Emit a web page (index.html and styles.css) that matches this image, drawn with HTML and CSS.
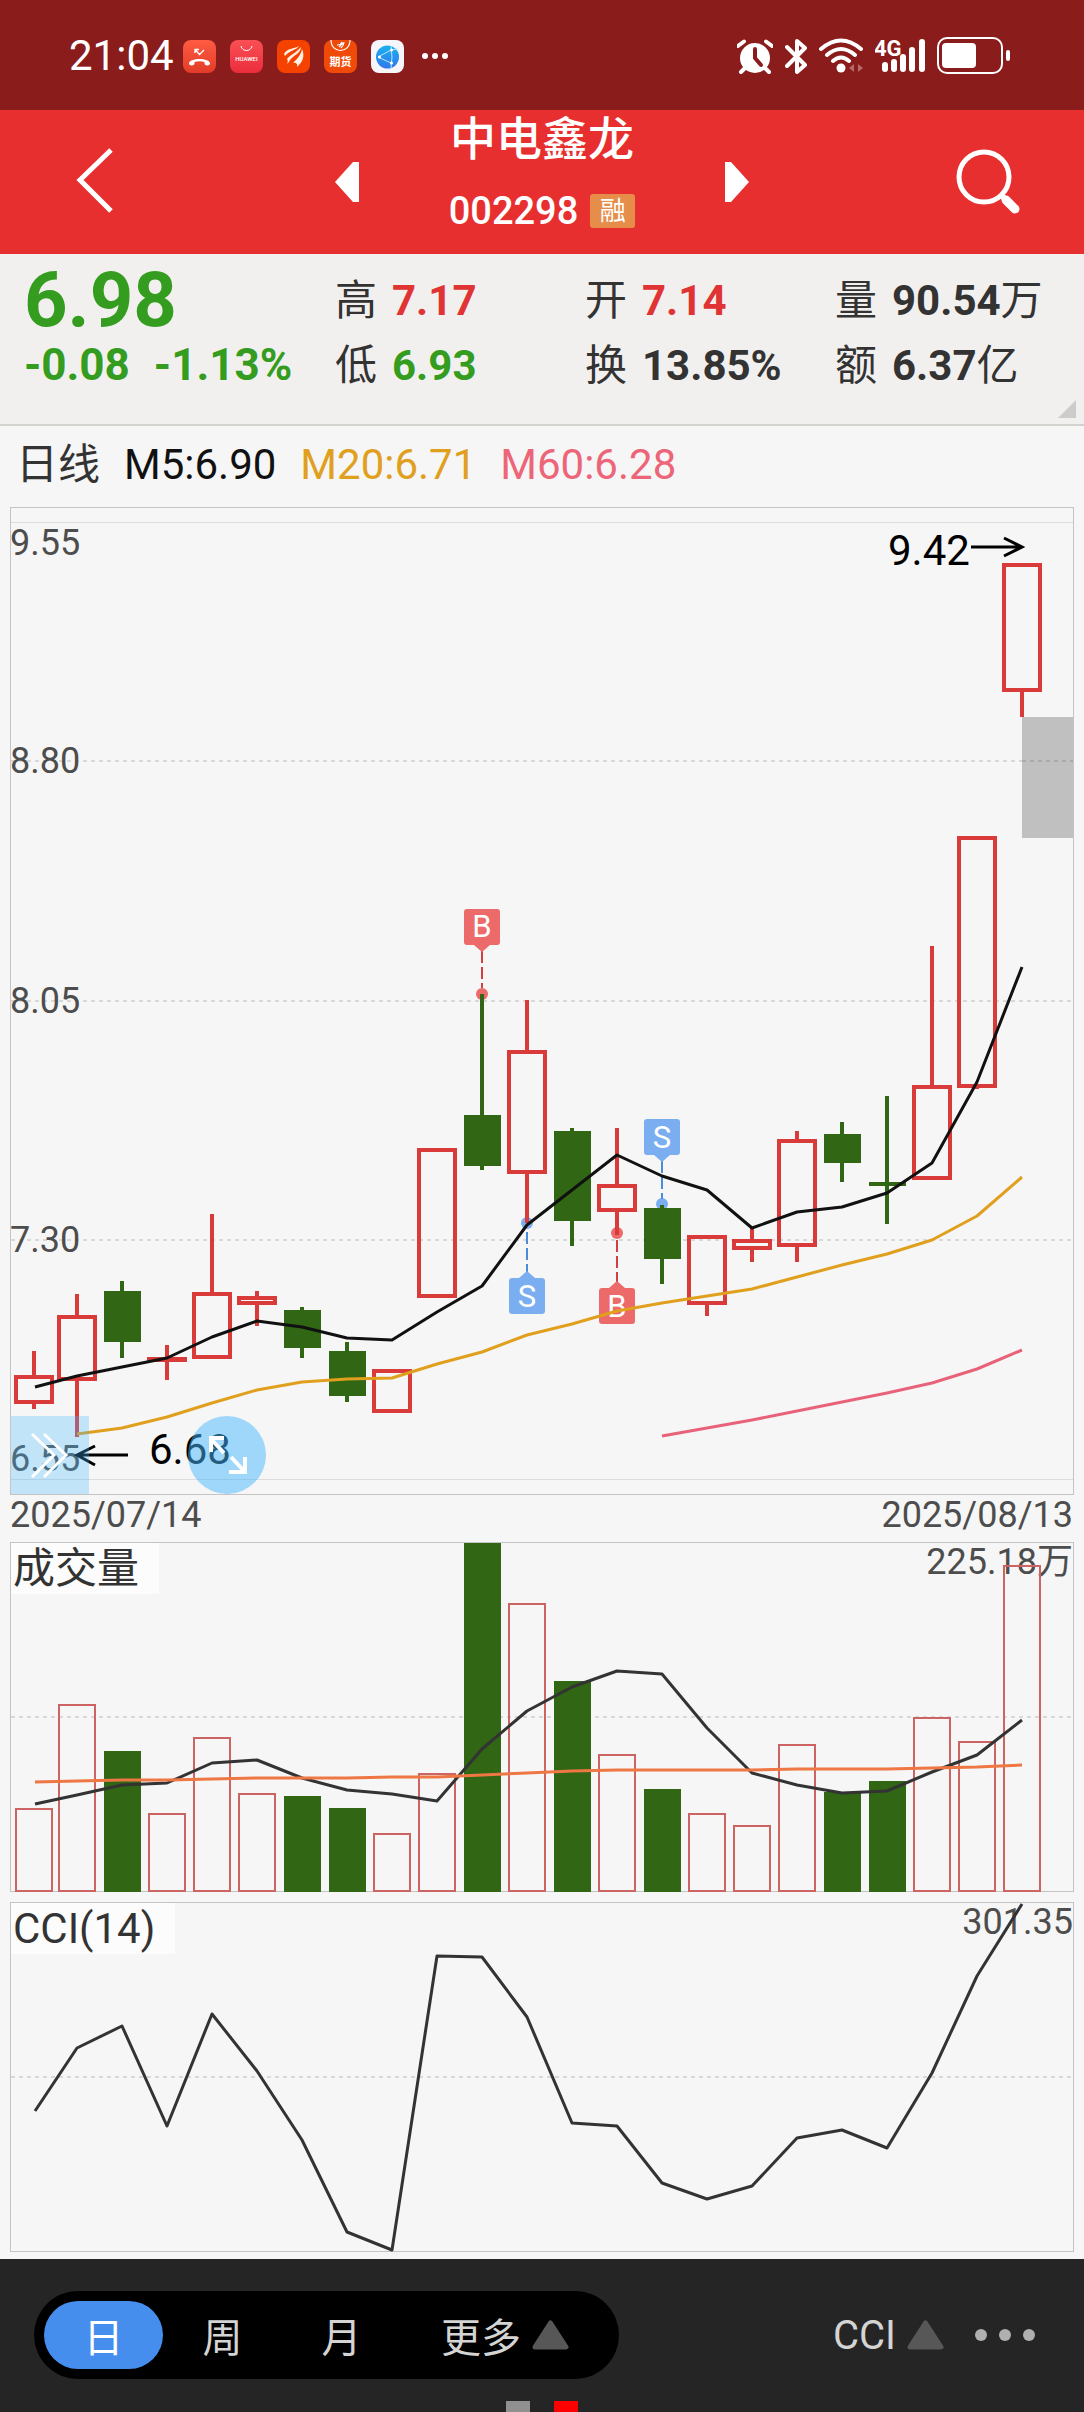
FILE: index.html
```html
<!DOCTYPE html>
<html lang="zh-CN">
<head>
<meta charset="utf-8">
<meta name="viewport" content="width=device-width, initial-scale=1">
<title>中电鑫龙 002298</title>
<link rel="stylesheet" href="styles.css">
</head>
<body>
<div class="status">
  <div class="status-side">
    <span class="clock">21:04</span>
    <div class="apps">
      <svg class="app" viewBox="0 0 33 33"><defs><linearGradient id="g1" x2="0" y2="1"><stop stop-color="#ff5c43"/><stop offset="1" stop-color="#e23c28"/></linearGradient></defs><rect width="33" height="33" rx="8" fill="url(#g1)"/><path d="M6 23.500c0-6 21-6 21 0 0 2.500-5.500 2.500-5.500 0v-1.500c-3-1-7-1-10 0v1.500c0 2.500-5.500 2.500-5.500 0z" fill="#fff"/><path d="M12 13V9.500h4M12 9.500l4.500 5 4.500-4.500" fill="none" stroke="#fff" stroke-width="1.300"/></svg>
      <svg class="app" viewBox="0 0 33 33"><defs><linearGradient id="g2" x2="0" y2="1"><stop stop-color="#fa5054"/><stop offset="1" stop-color="#ea2d3c"/></linearGradient></defs><rect width="33" height="33" rx="8" fill="url(#g2)"/><path d="M11 6c1 6 10 6 11 0" fill="none" stroke="#fff" stroke-width="1"/><text x="16.500" y="21" class="huawei">HUAWEI</text></svg>
      <svg class="app" viewBox="0 0 33 33"><rect width="33" height="33" rx="8" fill="#f54200"/><path d="M7 14c3-6 10-5 15-8-2 4-9 4-14 10zM10 19c3-4 9-6 14-12 0 6-7 8-11 13-1 2-2 3-3 4 1-2 1-4 0-5zM16 23c4-4 8-8 9-14 3 7 1 13-5 18 1-3-1-5-4-4z" fill="#fff0e4"/></svg>
      <svg class="app" viewBox="0 0 33 33"><rect width="33" height="33" rx="8" fill="#f04a08"/><path d="M7 0c0 14 19 14 19 0" fill="none" stroke="#fff" stroke-width="1.200"/><path d="M13 5c2 0 4-1 5-3M15 7l4-4M17 8c2-2 3-4 3-6" stroke="#fff" stroke-width="1.200"/><text x="16.500" y="26" class="futures">期货</text></svg>
      <svg class="app" viewBox="0 0 33 33"><defs><linearGradient id="g3" x2="0" y2="1"><stop stop-color="#1bb0f0"/><stop offset="1" stop-color="#3078ea"/></linearGradient></defs><rect width="33" height="33" rx="8" fill="#f6f6fa"/><circle cx="16.500" cy="17" r="11.500" fill="url(#g3)"/><path d="M20 6Q22 17 20 28M7 17L20 10 27 9M7 17L20 23" fill="none" stroke="#bfe4ff" stroke-width="1"/><circle cx="20.500" cy="10" r="1.500" fill="#fff"/><circle cx="8.500" cy="17" r="1.500" fill="#fff"/><circle cx="20.500" cy="23" r="1.500" fill="#fff"/></svg>
    </div>
    <svg class="more-apps" viewBox="0 0 28 8" fill="#fff"><circle cx="4" cy="4" r="3"/><circle cx="14" cy="4" r="3"/><circle cx="24" cy="4" r="3"/></svg>
  </div>
  <div class="indicators">
    <svg width="36" height="38" viewBox="737 37 36 38"><circle cx="755" cy="58" r="15" fill="#fff"/><path d="M738 46l6-4.500M772 46l-6-4.500M745 68l-4 4M765 68l4 4" stroke="#fff" stroke-width="4" stroke-linecap="round"/><path d="M755 49v9l6 7" fill="none" stroke="#8a1c1b" stroke-width="4" stroke-linecap="round"/></svg>
    <svg width="22" height="38" viewBox="785 37 22 38"><path d="M787 47l18 18-8 7V41l8 7-18 18" fill="none" stroke="#fff" stroke-width="4" stroke-linejoin="round" stroke-linecap="round"/></svg>
    <svg width="44" height="38" viewBox="819 37 44 38"><g fill="none" stroke="#fff" stroke-width="4" stroke-linecap="round"><path d="M821 49q20-17 40 0M827 55q14-12 28 0M833 61q8-7 16 0"/></g><circle cx="841" cy="68" r="4.500" fill="#fff"/><path d="M849 68l5-4v8zM863 68l-5-4v8z" fill="#b56a69"/></svg>
    <svg width="50" height="38" viewBox="875 37 50 38"><text x="874" y="56" class="net">4G</text><path d="M885 65v4M894 62v7M903 57v12M912 50v19M922 42v27" stroke="#fff" stroke-width="6" stroke-linecap="round"/></svg>
    <svg width="74" height="38" viewBox="937 37 74 38"><rect x="938" y="38" width="64" height="35" rx="9" fill="none" stroke="#fff" stroke-width="2"/><rect x="942" y="43" width="34" height="25" rx="4" fill="#fff"/><rect x="1006" y="50" width="4" height="11" rx="2" fill="#fff"/></svg>
  </div>
</div>

<header class="nav">
  <button class="nav-back" aria-label="返回"><svg width="40" height="66" viewBox="74 146 40 66"><path d="M111 149L80 179 111 210" fill="none" stroke="#fff" stroke-width="5"/></svg></button>
  <div class="nav-mid">
    <button aria-label="上一只"><svg width="24" height="40" viewBox="0 0 24 40"><path d="M0 20L18 0h6v40h-6z" fill="#fff"/></svg></button>
    <div class="title">
      <h1>中电鑫龙</h1>
      <div class="code"><span>002298</span><span class="badge">融</span></div>
    </div>
    <button aria-label="下一只"><svg width="24" height="40" viewBox="0 0 24 40"><path d="M24 20L6 0H0v40h6z" fill="#fff"/></svg></button>
  </div>
  <button class="nav-search" aria-label="搜索"><svg width="66" height="68" viewBox="956 148 66 68"><circle cx="984" cy="177" r="25" fill="none" stroke="#fff" stroke-width="5"/><path d="M1002 196l3 3" stroke="#fff" stroke-width="6"/><path d="M1006 200l9 9" stroke="#fff" stroke-width="9" stroke-linecap="round"/></svg></button>
</header>

<section class="quote">
  <div class="price">6.98</div>
  <div class="stat"><span>高</span><b class="up">7.17</b></div>
  <div class="stat"><span>开</span><b class="up">7.14</b></div>
  <div class="stat"><span>量</span><b>90.54<i>万</i></b></div>
  <div class="change"><b>-0.08</b><b>-1.13%</b></div>
  <div class="stat"><span>低</span><b class="down">6.93</b></div>
  <div class="stat"><span>换</span><b>13.85%</b></div>
  <div class="stat"><span>额</span><b>6.37<i>亿</i></b></div>
  <span class="corner"></span>
</section>

<main>
  <div class="legend"><span>日线</span><span class="m5">M5:6.90</span><span class="m20">M20:6.71</span><span class="m60">M60:6.28</span></div>

  <div class="panel">
    <svg class="chart" viewBox="11 508 1062 986">
      <path class="edge" d="M11 522h1062v1H11zM11 1479h1062v1H11z"/>
      <path class="grid" d="M11 761H1073M11 1001H1073M11 1240H1073"/>
      <g class="axis"><text x="10" y="555">9.55</text><text x="10" y="773">8.80</text><text x="10" y="1013">8.05</text><text x="10" y="1252">7.30</text><text x="10" y="1471">6.55</text></g>
      <rect x="1022" y="717" width="51" height="121" fill="#c0c0c0"/><path class="grid over" d="M1022 761H1073"/>
      <g class="dots">
        <g class="buy"><circle cx="482" cy="994" r="6"/><circle cx="617" cy="1233" r="6"/></g>
        <g class="sell"><circle cx="527" cy="1223" r="6"/><circle cx="662" cy="1204" r="6"/></g>
      </g>
      <g class="rise">
        <path d="M34 1351V1377M34 1402V1409M77 1294V1317M77 1379V1437M167 1345V1380M212 1214V1294M257 1291V1298M257 1304V1326M527 1000V1052M527 1173V1223M617 1128V1187M617 1210V1235M707 1304V1316M752 1228V1241M752 1248V1262M797 1131V1142M797 1245V1262M932 946V1088M977 1086V1089M1022 690V717"/>
        <rect x="16" y="1377" width="36" height="25"/><rect x="59" y="1317" width="36" height="62"/><rect x="149" y="1359" width="36" height="1"/><rect x="194" y="1294" width="36" height="63"/><rect x="239" y="1298" width="36" height="5"/><rect x="374" y="1371" width="36" height="40"/><rect x="419" y="1150" width="36" height="146"/><rect x="509" y="1052" width="36" height="120"/><rect x="599" y="1186" width="36" height="24"/><rect x="689" y="1237" width="36" height="66"/><rect x="734" y="1241" width="36" height="7"/><rect x="779" y="1141" width="36" height="104"/><rect x="914" y="1087" width="36" height="91"/><rect x="959" y="838" width="36" height="248"/><rect x="1004" y="565" width="36" height="125"/>
      </g>
      <g class="fall">
        <path d="M122 1281V1358M302 1307V1358M347 1342V1402M482 994V1170M572 1128V1246M662 1205V1284M842 1122V1182M887 1096V1224"/>
        <rect x="104" y="1291" width="37" height="51"/><rect x="284" y="1310" width="37" height="38"/><rect x="329" y="1351" width="37" height="45"/><rect x="464" y="1115" width="37" height="51"/><rect x="554" y="1131" width="37" height="90"/><rect x="644" y="1208" width="37" height="51"/><rect x="824" y="1134" width="37" height="29"/><rect x="869" y="1182" width="37" height="4"/>
      </g>
      <g class="mark buy"><path class="stem" d="M482 951V988M617 1240V1282"/><path d="M474 945h16l-8 7zM609 1288h16l-8-7z"/><rect x="464" y="909" width="36" height="36" rx="3"/><rect x="599" y="1288" width="36" height="36" rx="3"/><text x="482" y="937">B</text><text x="617" y="1317">B</text></g>
      <g class="mark sell"><path class="stem" d="M527 1232V1272M662 1161V1199"/><path d="M519 1278h16l-8-7zM654 1155h16l-8 7z"/><rect x="509" y="1278" width="36" height="36" rx="3"/><rect x="644" y="1119" width="36" height="36" rx="3"/><text x="527" y="1307">S</text><text x="662" y="1148">S</text></g>
      <polyline class="line l5" points="35,1387 77,1376 122,1367 167,1358 212,1337 257,1321 302,1327 347,1338 392,1340 437,1312 482,1286 527,1225 572,1190 617,1155 662,1176 707,1190 752,1228 797,1212 842,1207 887,1193 932,1163 977,1082 1022,967"/>
      <polyline class="line l20" points="77,1434 122,1428 167,1417 212,1403 257,1390 302,1382 347,1379 392,1378 437,1364 482,1352 527,1335 572,1324 617,1311 662,1303 707,1296 752,1289 797,1277 842,1265 887,1254 932,1240 977,1216 1022,1177"/>
      <polyline class="line l60" points="662,1436 707,1428 752,1420 797,1411 842,1402 887,1393 932,1383 977,1369 1022,1350"/>
      <g class="extreme"><text x="888" y="565">9.42</text><path d="M971 547H1022M1004 538L1022 547 1004 556"/><text x="149" y="1464">6.68</text><path d="M128 1455H77M95 1446L77 1455 95 1465"/></g>
    </svg>
    <button class="fab-forward" aria-label="展开"><svg width="40" height="48" viewBox="30 1432 40 48"><path d="M32 1435L54 1456 32 1478M44 1435L66 1456 44 1478" fill="none" stroke="#fff" stroke-width="3"/></svg></button>
    <button class="fab-zoom" aria-label="全屏"><svg width="48" height="48" viewBox="203 1432 48 48"><path d="M224 1439H211V1453M211 1440L224 1454M231 1458L245 1473M229 1473H245V1458" fill="none" stroke="#fff" stroke-width="4"/></svg></button>
  </div>
  <div class="dates"><time>2025/07/14</time><time>2025/08/13</time></div>

  <div class="panel volume">
    <svg class="chart" viewBox="11 1543 1062 348">
      <path class="grid" d="M11 1717H1073"/>
      <text class="axis end" x="1073" y="1574">225.18万</text>
      <g class="vol-rise"><rect x="16" y="1809" width="36" height="82"/><rect x="59" y="1705" width="36" height="186"/><rect x="149" y="1814" width="36" height="77"/><rect x="194" y="1738" width="36" height="153"/><rect x="239" y="1794" width="36" height="97"/><rect x="374" y="1834" width="36" height="57"/><rect x="419" y="1774" width="36" height="117"/><rect x="509" y="1604" width="36" height="287"/><rect x="599" y="1755" width="36" height="136"/><rect x="689" y="1814" width="36" height="77"/><rect x="734" y="1826" width="36" height="65"/><rect x="779" y="1745" width="36" height="146"/><rect x="914" y="1718" width="36" height="173"/><rect x="959" y="1742" width="36" height="149"/><rect x="1004" y="1566" width="36" height="325"/></g>
      <g class="fall"><rect x="104" y="1751" width="37" height="141"/><rect x="284" y="1796" width="37" height="96"/><rect x="329" y="1808" width="37" height="84"/><rect x="464" y="1543" width="37" height="349"/><rect x="554" y="1681" width="37" height="211"/><rect x="644" y="1789" width="37" height="103"/><rect x="824" y="1792" width="37" height="100"/><rect x="869" y="1781" width="37" height="111"/></g>
      <polyline class="line dark" points="35,1804 77,1795 122,1785 167,1783 212,1763 257,1760 302,1778 347,1790 392,1794 437,1801 482,1749 527,1711 572,1687 617,1671 662,1674 707,1728 752,1773 797,1785 842,1793 887,1791 932,1772 977,1755 1022,1720"/>
      <polyline class="line orange" points="35,1782 77,1781 122,1780 167,1780 212,1779 257,1778 302,1778 347,1778 392,1777 437,1777 482,1775 527,1773 572,1771 617,1770 662,1770 707,1770 752,1770 797,1769 842,1769 887,1769 932,1768 977,1767 1022,1765"/>
    </svg>
    <span class="tag">成交量</span>
  </div>

  <div class="panel">
    <svg class="chart" viewBox="11 1903 1062 348">
      <path class="grid" d="M11 2077H1073"/>
      <text class="axis end" x="1073" y="1934">301.35</text>
      <polyline class="line dark" points="35,2111 77,2048 122,2026 167,2126 212,2014 257,2071 302,2140 347,2232 392,2250 437,1956 482,1957 527,2017 572,2123 617,2126 662,2183 707,2199 752,2186 797,2138 842,2130 887,2148 932,2073 977,1976 1022,1904"/>
    </svg>
    <span class="tag">CCI(14)</span>
  </div>
</main>

<footer>
  <div class="tools">
    <nav class="tabs">
      <button class="active">日</button><button>周</button><button>月</button>
      <button class="tab-more">更多<svg class="tri" viewBox="0 0 37 30"><path d="M18.500 3L34 27H3z"/></svg></button>
    </nav>
    <div class="indicator">
      <button>CCI<svg class="tri" viewBox="0 0 37 30"><path d="M18.500 3L34 27H3z"/></svg></button>
      <button aria-label="更多指标"><svg width="62" height="14" viewBox="0 0 62 14" fill="#b0b0b0"><circle cx="7" cy="7" r="6"/><circle cx="31" cy="7" r="6"/><circle cx="55" cy="7" r="6"/></svg></button>
    </div>
  </div>
  <div class="pager"><span></span><span class="on"></span></div>
</footer>
</body>
</html>
```
FILE: styles.css
```css
* { box-sizing: border-box; }
body {
  margin: 0;
  background: #f6f6f6;
  color: #333;
  font-family: Roboto, "Noto Sans CJK SC", sans-serif;
}
button {
  margin: 0;
  padding: 0;
  border: 0;
  background: none;
  color: inherit;
  font: inherit;
}
svg { display: block; flex: none; }

/* status bar */
.status {
  display: flex;
  justify-content: space-between;
  align-items: center;
  height: 110px;
  padding: 2px 73px 0 69px;
  background: #8a1c1b;
  color: #fff;
}
.status-side, .apps, .indicators { display: flex; align-items: center; }
.clock { font-size: 42px; line-height: 48px; margin-right: 9px; }
.apps { gap: 14px; }
.app { width: 33px; height: 33px; }
.more-apps { width: 28px; height: 8px; margin-left: 17px; }
.indicators { gap: 12px; }
.huawei { font-size: 6px; font-weight: 500; fill: #fff; text-anchor: middle; }
.futures { font-size: 11px; font-weight: 700; fill: #fff; text-anchor: middle; }
.net { font-size: 22px; font-weight: 700; fill: #fff; }

/* title bar */
.nav {
  display: grid;
  grid-template-columns: 1fr auto 1fr;
  align-items: center;
  background: #e82f30;
  color: #fff;
}
.nav-back { justify-self: start; padding: 0 74px; margin-bottom: 5px; }
.nav-search { justify-self: end; padding-right: 62px; }
.nav-mid { display: flex; align-items: center; }
.title { width: 366px; padding: 1px 0 26px; text-align: center; }
.title h1 { margin: 0 0 27px; font-size: 46px; font-weight: 500; line-height: 56px; }
.code {
  display: flex;
  justify-content: center;
  align-items: center;
  gap: 12px;
  font-size: 38px;
  font-weight: 500;
  line-height: 34px;
}
.badge {
  width: 45px;
  border-radius: 3px;
  background: #e58d49;
  font-size: 26px;
  font-weight: 400;
}

/* quote summary */
.quote {
  position: relative;
  display: grid;
  grid-template-columns: 311fr 250fr 250fr 249fr;
  grid-auto-rows: 65px;
  padding: 14px 0 26px 24px;
  border-bottom: 2px solid #d4d2ce;
  background: #f2f0ee;
  font-size: 42px;
  line-height: 65px;
  white-space: nowrap;
}
.price { color: #349c1e; font-size: 76px; font-weight: 700; }
.change { display: flex; gap: 24px; color: #349c1e; font-size: 44px; }
.stat { display: flex; align-items: baseline; gap: 15px; height: 65px; }
.stat i { font-style: normal; font-weight: 400; }
.up { color: #e03434; }
.down { color: #349c1e; }
.corner {
  position: absolute;
  right: 8px;
  bottom: 6px;
  width: 18px;
  height: 18px;
  background: #ccc;
  clip-path: polygon(100% 0, 100% 100%, 0 100%);
}

/* charts */
.legend {
  display: flex;
  align-items: baseline;
  gap: 24px;
  height: 81px;
  padding-left: 16px;
  font-size: 42px;
  line-height: 78px;
}
.m5 { color: #111; }
.m20 { color: #e0a01e; }
.m60 { color: #ec6579; }
.panel { position: relative; margin: 0 10px; border: 1px solid #c4c4c4; }
.volume { margin-bottom: 10px; }
.chart { width: 100%; overflow: visible; }
.edge { fill: #ddd; }
.grid { fill: none; stroke: #d8d8d8; stroke-width: 2; stroke-dasharray: 4 4; }
.over { stroke: #aaa; }
.axis { font-size: 36px; fill: #4d4d4d; }
.end { text-anchor: end; }
.rise { fill: none; stroke: #d93a3a; stroke-width: 4; }
.fall { fill: #306614; }
.fall path { stroke: #306614; stroke-width: 4; }
.vol-rise { fill: none; stroke: #cc6464; stroke-width: 2; }
.line { fill: none; stroke-width: 3; stroke-linejoin: round; }
.l5 { stroke: #111; }
.l20 { stroke: #e0a01e; }
.l60 { stroke: #e8637a; }
.dark { stroke: #333; }
.orange { stroke: #ee7744; }
.buy { fill: #ec6a6a; stroke: #d04040; }
.sell { fill: #7aaef0; stroke: #4a8cd8; }
.dots circle, .mark > * { stroke: none; }
.mark .stem { stroke: inherit; stroke-width: 2; stroke-dasharray: 12 4; }
.mark text { fill: #fff; font-size: 31px; text-anchor: middle; }
.extreme text { font-size: 42px; fill: #000; }
.extreme path { fill: none; stroke: #000; stroke-width: 3; }
.tag {
  position: absolute;
  left: 0;
  top: 0;
  padding: 0 20px 0 2px;
  background: #fcfcfc;
  font-size: 42px;
  line-height: 51px;
}
.fab-forward, .fab-zoom {
  position: absolute;
  bottom: 0;
  display: flex;
  align-items: center;
  justify-content: center;
  width: 78px;
  height: 78px;
}
.fab-forward { left: 0; background: rgba(70, 184, 254, 0.3); }
.fab-zoom { left: 177px; border-radius: 50%; background: rgba(70, 184, 254, 0.5); }
.dates {
  display: flex;
  justify-content: space-between;
  padding: 0 11px 7px 10px;
  color: #4d4d4d;
  font-size: 36px;
  line-height: 40px;
}

/* bottom bar */
footer { margin-top: 7px; padding-top: 32px; background: #252525; color: #d4d4d4; font-size: 40px; }
.tools { display: flex; justify-content: space-between; align-items: center; padding: 0 48px 0 34px; }
.tabs { display: flex; padding: 10px; border-radius: 44px; background: #000; }
.tabs button { width: 119px; height: 68px; border-radius: 34px; }
.tabs .active { background: #468eee; color: #fff; }
.tabs .tab-more { width: 208px; }
.tab-more, .indicator, .indicator button { display: flex; align-items: center; justify-content: center; }
.tab-more, .indicator button { gap: 11px; }
.indicator { gap: 30px; }
.tri { width: 37px; height: 30px; fill: #575757; stroke: #575757; stroke-width: 5; stroke-linejoin: round; }
.pager { display: flex; justify-content: center; gap: 24px; padding-top: 22px; }
.pager span { width: 24px; height: 11px; background: #909090; }
.pager .on { background: #f00; }
```
